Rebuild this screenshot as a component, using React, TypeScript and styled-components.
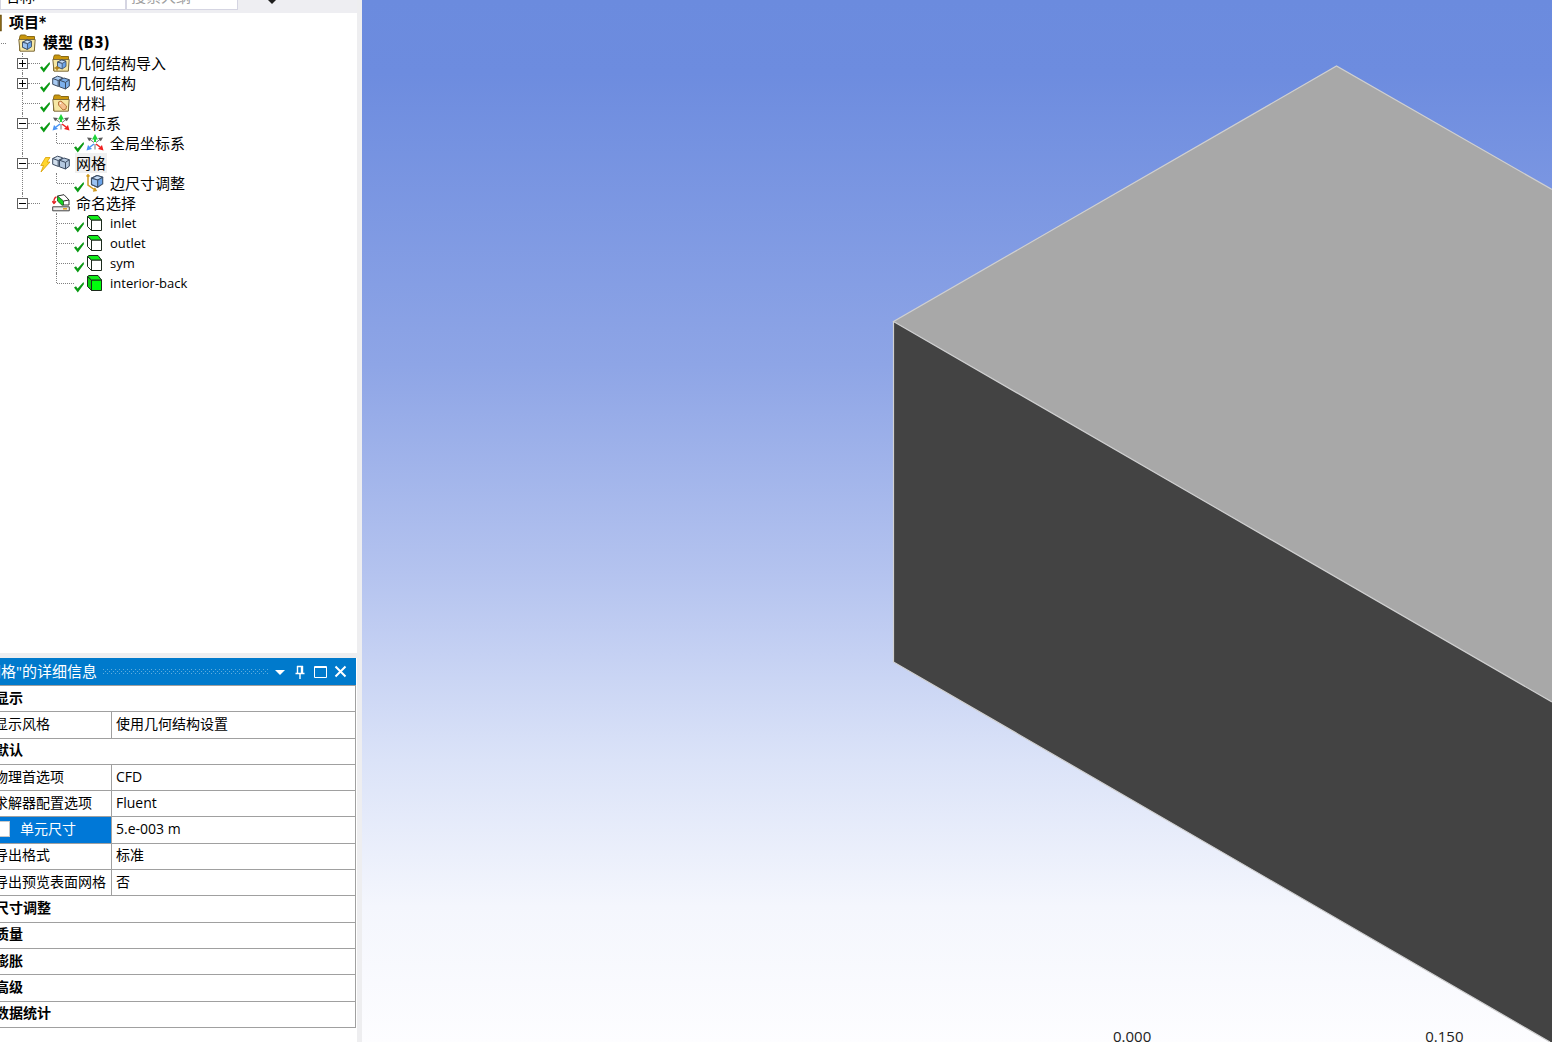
import { ReactNode } from 'react';
import styled, { createGlobalStyle } from 'styled-components';

const Global = createGlobalStyle`
  * { box-sizing: border-box; }
  html, body { margin: 0; }
  body {
    overflow: hidden;
    background: #fff;
    color: #000;
    font-family: "Open Sans", "Noto Sans CJK SC", sans-serif;
    font-size: 15px;
  }
  button, input, select { font: inherit; color: inherit; }
`;

const Shell = styled.div`
  display: flex;
  height: 100vh;
  overflow: hidden;
`;

const Side = styled.aside`
  flex: none;
  display: flex;
  flex-direction: column;
  width: 382px;
  margin: -18px 0 0 -20px;
  border-right: 5px solid #eeeef0;
`;

const FilterBar = styled.form`
  flex: none;
  display: flex;
  align-items: flex-start;
  height: 31px;
  padding-left: 20px;
  background: #eeeef2;
`;

const FilterSelect = styled.select`
  appearance: none;
  width: 126px;
  height: 28px;
  padding: 0 4px;
  border: 1px solid #d5d5e2;
  border-radius: 0;
  background: #fff;
`;

const FilterInput = styled.input`
  width: 112px;
  height: 28px;
  padding: 0 4px;
  border: 1px solid #d5d5e2;
  background: #fff;
  &::placeholder { color: #a0a0a0; opacity: 1; }
`;

const MoreButton = styled.button`
  width: 20px;
  height: 28px;
  margin-left: 24px;
  padding: 8px 0 0;
  border: 0;
  background: none;
  line-height: 0;
`;

const TreePane = styled.nav`
  flex: 1;
  min-height: 0;
  overflow: hidden;
  background: #fff;
`;

const Branch = styled.ul<{ $indent: number }>`
  margin: 0 0 0 ${(p) => p.$indent}px;
  padding: 0;
  list-style: none;
`;

const Leaf = styled.li`
  position: relative;
  &::before {
    content: "";
    position: absolute;
    top: 0;
    bottom: 0;
    left: 5px;
    border-left: 1px dotted #808080;
  }
  &:last-child::before { bottom: auto; height: 10px; }
`;

const Row = styled.div`
  display: grid;
  grid-template-columns: 23px 12px 18px auto;
  align-items: center;
  justify-content: start;
  height: 20px;
`;

const Connector = styled.span<{ $box: boolean }>`
  display: flex;
  align-items: center;
  padding-left: ${(p) => (p.$box ? 0 : 6)}px;
  &::after {
    content: "";
    flex: 1;
    border-top: 1px dotted #808080;
  }
`;

const Expander = styled.button`
  position: relative;
  width: 11px;
  height: 11px;
  padding: 0;
  border: 1px solid #606060;
  background: #fff;
  line-height: 0;
`;

const Status = styled.span`
  align-self: end;
  height: 12px;
  line-height: 0;
`;

const BoltStatus = styled(Status)`
  height: 16px;
`;

const IconCell = styled.span`
  line-height: 0;
`;

const Label = styled.span<{ $selected?: boolean }>`
  padding: 0 1px;
  margin-left: 5px;
  line-height: 20px;
  white-space: nowrap;
  background: ${(p) => (p.$selected ? '#f0f0f0' : 'none')};
`;

const LatinLabel = styled(Label)`
  font-size: 13px;
`;

const BoldLabel = styled(Label)`
  margin-left: 6px;
  font-family: "DejaVu Sans Condensed", "Noto Sans CJK SC", sans-serif;
  font-weight: 700;
`;

const RootRow = styled.div`
  display: flex;
  align-items: center;
  height: 20px;
  padding-left: 4px;
`;

const Details = styled.section`
  flex: none;
  padding: 0 1px 14px 0;
  border-top: 5px solid #eeeef0;
`;

const TitleBar = styled.header`
  display: flex;
  align-items: center;
  height: 27px;
  padding-right: 6px;
  background: #007acc;
  color: #fff;
`;

const Title = styled.h2`
  margin: 0;
  font-size: 15px;
  font-weight: 400;
  line-height: 27px;
  white-space: nowrap;
`;

const Grip = styled.span`
  flex: 1;
  height: 5px;
  margin: 0 2px 0 6px;
  background:
    linear-gradient(#5fadde, #5fadde) 0 0 / 0 0,
    conic-gradient(at 1px 1px, transparent 75%, #5fadde 0) 0 0 / 4px 4px,
    conic-gradient(at 1px 1px, transparent 75%, #5fadde 0) 2px 2px / 4px 4px;
`;

const TitleButton = styled.button`
  width: 20px;
  height: 20px;
  padding: 0;
  border: 0;
  background: none;
  line-height: 0;
`;

const Grid = styled.table`
  width: 100%;
  height: 343px;
  border-collapse: collapse;
  table-layout: fixed;
  font-size: 14px;
  line-height: 20px;
  td, th {
    padding: 0 4px 2px;
    border: 1px solid #a0a0a0;
    text-align: left;
    white-space: nowrap;
  }
`;

const NameCol = styled.col`
  width: 131px;
`;

const SectionHead = styled.th`
  && { padding-left: 14px; }
  font-weight: 700;
`;

const NameCell = styled.th<{ $active?: boolean }>`
  && { padding: 0 0 2px 13px; }
  font-weight: 400;
  color: ${(p) => (p.$active ? '#fff' : '#000')};
  background: ${(p) => (p.$active ? '#0078d7' : '#fff')};
`;

const CheckLabel = styled.label`
  display: flex;
  align-items: center;
  gap: 10px;
`;

const Tick = styled.input`
  appearance: none;
  width: 16px;
  height: 16px;
  margin: 0;
  border: 1px solid #c8c8c8;
  background: #fff;
`;

const Viewport = styled.main`
  position: relative;
  flex: 1;
  min-width: 0;
  overflow: hidden;
  background: linear-gradient(#6b8bde 0%, #6d8cdf 7%, #8ea5e6 35%, #b4c3ef 55%, #dbe3f8 73%, #f4f6fd 87%, #fdfdff 100%);
`;

const Scene = styled.svg`
  display: block;
  width: 100%;
  height: 100%;
`;

const Scale = styled.div`
  position: absolute;
  left: 751px;
  bottom: -4px;
  display: flex;
  gap: 274px;
  color: #222;
  font-size: 15px;
  line-height: 20px;
`;

const Check = () => (
  <svg width="12" height="12" viewBox="0 0 12 12">
    <path d="M0 6.500 2 5.300 3.600 7.600 9.500 1 10 3 3.800 11.500z" fill="#0a9a14" />
  </svg>
);

const Bolt = () => (
  <svg width="12" height="16" viewBox="0 0 12 16">
    <path d="M5.500.500 10 .500 7 5h3L1 15l2.500-6.500H.8z" fill="#ffd52e" stroke="#d9a000" strokeWidth=".8" />
  </svg>
);

const Cube = ({ x, y, s, fill = '#6ba4ea' }: { x: number; y: number; s: number; fill?: string }) => (
  <g transform={`translate(${x} ${y}) scale(${s})`} stroke="#3d4f66" strokeWidth="1" strokeLinejoin="round">
    <path d="M0 2.500 5 0l5 1.500v6L5.500 10.500 0 8z" fill={fill} />
    <path d="M0 2.500 5 0l5 1.500-4.500 2.500z" fill="#c4dcf8" />
    <path d="M5.500 4v6.500L0 8V2.500z" fill="#9cc3f2" />
  </g>
);

const Folder = ({ children }: { children?: ReactNode }) => (
  <svg width="18" height="18" viewBox="0 0 18 18">
    <path d="M1.500 16.500v-13l1-2.500h5l1.500 1.500h7.500v14z" fill="#c9960c" stroke="#8a6a16" />
    <path d="M.8 5.500h16.400l-.9 11.700H2z" fill="#f6e7a4" stroke="#7d6c3c" />
    {children}
  </svg>
);

const ProjectIcon = () => (
  <svg width="18" height="18" viewBox="0 0 18 18">
    <path d="M1 1.500h16v15H1z" fill="#d6a52a" stroke="#6e5210" strokeWidth="1.500" />
  </svg>
);
const ModelIcon = () => <Folder><Cube x={4.5} y={6} s={0.9} /></Folder>;
const ImportIcon = () => (
  <Folder>
    <Cube x={5.5} y={6} s={0.85} />
    <path d="M2.500 14h5M5 12v4.500" stroke="#b07d10" strokeWidth="1.400" />
  </Folder>
);
const MaterialIcon = () => (
  <Folder>
    <path d="M6.500 8 9 7l5.500 5-.5 3-3 1-4.500-5z" fill="#f6c08f" stroke="#b5763c" />
    <circle cx="8.500" cy="9.200" r=".8" fill="#fff" />
  </Folder>
);
const BlocksIcon = ({ a, b }: { a: string; b: string }) => (
  <svg width="18" height="18" viewBox="0 0 18 18" stroke="#3a4a60" strokeLinejoin="round">
    <path d="m.7 4.500 4.800-2.300 5 1.500v6.500L6.500 12.500.7 10.300z" fill={a} />
    <path d="m.7 4.500 5.500 2v5.700M6.200 6.500 10 4.500" fill="none" />
    <path d="m7.500 6.200 4.500-2.200 5.300 1.700v6.500L13.500 15l-6-2.200z" fill={b} />
    <path d="m7.500 6.200 6 2.200v6.500M13.500 8.400l3.800-2.700" fill="none" />
  </svg>
);
const AxesIcon = () => (
  <svg width="18" height="18" viewBox="0 0 18 18">
    <g fill="none">
      <path d="M9 8V4" stroke="#1fd43a" strokeWidth="2" />
      <path d="m8 8.500-4-3M10 8.500l4-3M9 10v5.500" stroke="#777" />
      <path d="m8 10-4 3" stroke="#4a94f5" strokeWidth="1.500" />
      <path d="m10 10 4 3" stroke="#f02020" strokeWidth="1.500" />
    </g>
    <path d="M9 0 6 5.500h6z" fill="#1fd43a" />
    <path d="m1 3.500 5 .5-2.800 3.200zM17 3.500l-5 .5 2.800 3.200z" fill="#5b5b5b" />
    <path d="m.5 16.500 1.500-5.500 4 4z" fill="#4a94f5" />
    <path d="m17.500 16.500-1.500-5.500-4 4z" fill="#f02020" />
  </svg>
);
const SizingIcon = () => (
  <svg width="18" height="18" viewBox="0 0 18 18">
    <path d="M2 1v10l7 5M.5 2.500 2 .8 3.500 2.500M7 17l3-.6-1.500-2.600" fill="none" stroke="#d09a20" strokeWidth="1.500" />
    <Cube x={5.5} y={1.5} s={1.12} />
  </svg>
);
const SelectionIcon = () => (
  <svg width="18" height="18" viewBox="0 0 18 18" strokeLinejoin="round">
    <path d="M5.500 2 12 .7l5 5.300v5h-5.500z" fill="#fff" stroke="#333" />
    <path d="M5.500 2 11.500 7v4.200H10L5.500 7z" fill="#17d422" stroke="#234a23" strokeWidth=".8" />
    <path d="m11.500 7 5.500-1" fill="none" stroke="#333" />
    <path d="M4.500 3C2.500 3.500 1.800 5.500 2 8.500M.3 7.200 2 9.500l2-2.200" fill="none" stroke="#e32626" strokeWidth="1.300" />
    <path d="M.7 12.800h16.600v4H.7z" fill="#eee" stroke="#444" />
    <path d="M11 14.800h4" stroke="#e0a020" strokeWidth="1.500" />
  </svg>
);
const FaceIcon = ({ solid }: { solid?: boolean }) => (
  <svg width="18" height="18" viewBox="0 0 18 18" stroke="#1c2a1c" strokeLinejoin="round">
    <path d="M1.500 2.500 5.500 6v10.500l-4-4z" fill={solid ? '#0bd312' : '#fff'} />
    <path d="M5.500 6h10v10.500h-10z" fill={solid ? '#00ff0c' : '#fff'} />
    <path d="M1.500 2.500 3 1.500h9L15.500 6h-10z" fill="#12ee1c" />
  </svg>
);

type Node = {
  text: string;
  icon: ReactNode;
  status?: 'ok' | 'bolt';
  box?: 'plus' | 'minus';
  bold?: boolean;
  selected?: boolean;
  latin?: boolean;
  children?: Node[];
};

const face = (text: string, solid?: boolean): Node => ({
  text, icon: <FaceIcon solid={solid} />, status: 'ok', latin: true,
});

const tree: Node[] = [
  {
    text: '模型 (B3)', icon: <ModelIcon />, bold: true,
    children: [
      { text: '几何结构导入', icon: <ImportIcon />, status: 'ok', box: 'plus' },
      { text: '几何结构', icon: <BlocksIcon a="#a9cbf3" b="#7db0ec" />, status: 'ok', box: 'plus' },
      { text: '材料', icon: <MaterialIcon />, status: 'ok' },
      {
        text: '坐标系', icon: <AxesIcon />, status: 'ok', box: 'minus',
        children: [{ text: '全局坐标系', icon: <AxesIcon />, status: 'ok' }],
      },
      {
        text: '网格', icon: <BlocksIcon a="#d3e0ee" b="#b4c8df" />, status: 'bolt', box: 'minus', selected: true,
        children: [{ text: '边尺寸调整', icon: <SizingIcon />, status: 'ok' }],
      },
      {
        text: '命名选择', icon: <SelectionIcon />, box: 'minus',
        children: [face('inlet'), face('outlet'), face('sym'), face('interior-back', true)],
      },
    ],
  },
];

const TreeNodes = ({ nodes, indent }: { nodes: Node[]; indent: number }) => (
  <Branch $indent={indent}>
    {nodes.map((n) => {
      const Text = n.latin ? LatinLabel : n.bold ? BoldLabel : Label;
      return (
        <Leaf key={n.text}>
          <Row>
            <Connector $box={!!n.box}>
              {n.box && (
                <Expander type="button" aria-label={n.text}>
                  <svg width="9" height="9" viewBox="0 0 9 9" stroke="#000">
                    <path d={n.box === 'plus' ? 'M1 4.500h7M4.500 1v7' : 'M1 4.500h7'} />
                  </svg>
                </Expander>
              )}
            </Connector>
            {n.status === 'bolt' ? <BoltStatus><Bolt /></BoltStatus> : <Status>{n.status && <Check />}</Status>}
            <IconCell>{n.icon}</IconCell>
            <Text $selected={n.selected}>{n.text}</Text>
          </Row>
          {n.children && <TreeNodes nodes={n.children} indent={34} />}
        </Leaf>
      );
    })}
  </Branch>
);

type Entry = { head: string } | { name: string; value: string; tick?: boolean };

const entries: Entry[] = [
  { head: '显示' },
  { name: '显示风格', value: '使用几何结构设置' },
  { head: '默认' },
  { name: '物理首选项', value: 'CFD' },
  { name: '求解器配置选项', value: 'Fluent' },
  { name: '单元尺寸', value: '5.e-003 m', tick: true },
  { name: '导出格式', value: '标准' },
  { name: '导出预览表面网格', value: '否' },
  { head: '尺寸调整' },
  { head: '质量' },
  { head: '膨胀' },
  { head: '高级' },
  { head: '数据统计' },
];

export default function App() {
  return (
    <Shell>
      <Global />
      <Side>
        <FilterBar>
          <FilterSelect aria-label="筛选">
            <option>名称</option>
          </FilterSelect>
          <FilterInput aria-label="搜索" placeholder="搜索大纲" />
          <MoreButton type="button" aria-label="更多">
            <svg width="12" height="12" viewBox="0 0 12 12"><path d="M1.500 5.500h9L6 10z" fill="#1e1e1e" /></svg>
          </MoreButton>
        </FilterBar>
        <TreePane>
          <RootRow>
            <IconCell><ProjectIcon /></IconCell>
            <BoldLabel>项目*</BoldLabel>
          </RootRow>
          <TreeNodes nodes={tree} indent={3} />
        </TreePane>
        <Details>
          <TitleBar>
            <Title>"网格"的详细信息</Title>
            <Grip />
            <TitleButton type="button" aria-label="菜单">
              <svg width="20" height="20" viewBox="0 0 20 20"><path d="M5 8h10l-5 5z" fill="#fff" /></svg>
            </TitleButton>
            <TitleButton type="button" aria-label="固定">
              <svg width="20" height="20" viewBox="0 0 20 20" fill="none" stroke="#fff">
                <path d="M7.500 4v7.500M7 4.500h6M5.500 11.500h9M10 12v5" strokeWidth="1.400" />
                <path d="M12 4v7.500" strokeWidth="2.400" />
              </svg>
            </TitleButton>
            <TitleButton type="button" aria-label="最大化">
              <svg width="20" height="20" viewBox="0 0 20 20" fill="none" stroke="#fff">
                <path d="M4.500 4.500h12v11h-12zM4 5.500h13" />
              </svg>
            </TitleButton>
            <TitleButton type="button" aria-label="关闭">
              <svg width="20" height="20" viewBox="0 0 20 20" fill="none" stroke="#fff">
                <path d="m5.500 4.500 10 10M15.500 4.500l-10 10" strokeWidth="2" />
              </svg>
            </TitleButton>
          </TitleBar>
          <Grid>
            <colgroup><NameCol /><col /></colgroup>
            <tbody>
              {entries.map((e) =>
                'head' in e ? (
                  <tr key={e.head}><SectionHead colSpan={2}>{e.head}</SectionHead></tr>
                ) : (
                  <tr key={e.name}>
                    <NameCell scope="row" $active={e.tick}>
                      {e.tick ? <CheckLabel><Tick type="checkbox" />{e.name}</CheckLabel> : e.name}
                    </NameCell>
                    <td>{e.value}</td>
                  </tr>
                ),
              )}
            </tbody>
          </Grid>
        </Details>
      </Side>
      <Viewport>
        <Scene viewBox="0 0 1190 1042" preserveAspectRatio="xMinYMin slice">
          <path d="M531.500 321.500 974.500 66 1190 189.500V702z" fill="#a8a8a8" />
          <path d="M531.500 321.500 1190 702v340h-2L531.500 662z" fill="#434343" />
          <path d="M1190 189.500 974.500 66 531.500 321.500 1190 702M531.500 321.500V662L1188 1042" fill="none" stroke="#d0d0d0" strokeWidth="1.200" />
        </Scene>
        <Scale><span>0.000</span><span>0.150</span></Scale>
      </Viewport>
    </Shell>
  );
}
